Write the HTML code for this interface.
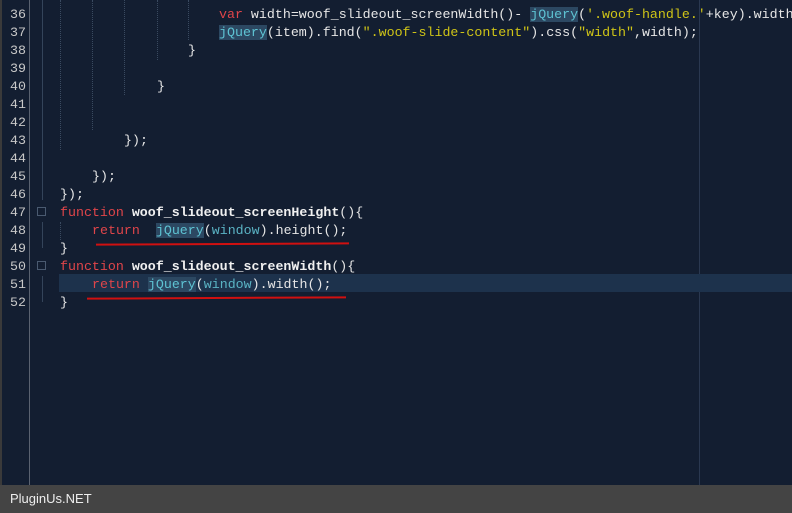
<!DOCTYPE html>
<html><head><style>
body{margin:0;width:792px;height:513px;background:#131e31;overflow:hidden;position:relative;font-family:"Liberation Mono",monospace;font-size:13.3px;}
.l{position:absolute;white-space:pre;height:18px;line-height:18px;color:#e6e6e6;margin-top:1px}
.n{position:absolute;left:0;width:26px;text-align:right;color:#c8c8c8;height:18px;line-height:18px;margin-top:1px}
.k{color:#e0454a}.j{color:#5ec3d3;background:#2c4862}.s{color:#cfc417}.w{color:#5ab3c4}.b{font-weight:bold;color:#f0f0f0}
.g{position:absolute;width:0;border-left:1px dotted #3a4a60}
.f{position:absolute;left:37px;width:9px;height:9px;border:1px solid #4a5a70;box-sizing:border-box}
</style></head><body>
<div style="position:absolute;left:0;top:0;width:2px;height:485px;background:#3a3a3a"></div>
<div style="position:absolute;left:29px;top:0;width:1px;height:485px;background:#5a6270"></div>
<div style="position:absolute;left:699px;top:0;width:1px;height:485px;background:#2a3850"></div>
<div style="position:absolute;left:59px;top:274px;width:733px;height:18px;background:#1d324c"></div>
<div class="g" style="left:60px;top:0;height:150px"></div>
<div class="g" style="left:92px;top:0;height:130px"></div>
<div class="g" style="left:124px;top:0;height:95px"></div>
<div class="g" style="left:157px;top:0;height:60px"></div>
<div class="g" style="left:188px;top:0;height:40px"></div>
<div class="g" style="left:60px;top:222px;height:18px"></div>
<div style="position:absolute;left:42px;top:0;width:1px;height:200px;background:#34445a"></div>
<div style="position:absolute;left:42px;top:222px;width:1px;height:26px;background:#34445a"></div>
<div style="position:absolute;left:42px;top:276px;width:1px;height:26px;background:#34445a"></div>
<div class="f" style="top:207px"></div><div class="f" style="top:261px"></div>
<div class="n" style="top:5px">36</div><div class="n" style="top:23px">37</div><div class="n" style="top:41px">38</div><div class="n" style="top:59px">39</div><div class="n" style="top:77px">40</div><div class="n" style="top:95px">41</div><div class="n" style="top:113px">42</div><div class="n" style="top:131px">43</div><div class="n" style="top:149px">44</div><div class="n" style="top:167px">45</div><div class="n" style="top:185px">46</div><div class="n" style="top:203px">47</div><div class="n" style="top:221px">48</div><div class="n" style="top:239px">49</div><div class="n" style="top:257px">50</div><div class="n" style="top:275px">51</div><div class="n" style="top:293px">52</div>
<div class="l" style="left:219px;top:5px"><span class="k">var</span> width=woof_slideout_screenWidth()- <span class="j">jQuery</span>(<span class="s">'.woof-handle.'</span>+key).width</div>
<div class="l" style="left:219px;top:23px"><span class="j">jQuery</span>(item).find(<span class="s">".woof-slide-content"</span>).css(<span class="s">"width"</span>,width);</div>
<div class="l" style="left:188px;top:41px">}</div>
<div class="l" style="left:157px;top:77px">}</div>
<div class="l" style="left:124px;top:131px">});</div>
<div class="l" style="left:92px;top:167px">});</div>
<div class="l" style="left:60px;top:185px">});</div>
<div class="l" style="left:60px;top:203px"><span class="k">function</span> <span class="b">woof_slideout_screenHeight</span>(){</div>
<div class="l" style="left:92px;top:221px"><span class="k">return</span>  <span class="j">jQuery</span>(<span class="w">window</span>).height();</div>
<div class="l" style="left:60px;top:239px">}</div>
<div class="l" style="left:60px;top:257px"><span class="k">function</span> <span class="b">woof_slideout_screenWidth</span>(){</div>
<div class="l" style="left:92px;top:275px"><span class="k">return</span> <span class="j">jQuery</span>(<span class="w">window</span>).width();</div>
<div class="l" style="left:60px;top:293px">}</div>
<div style="position:absolute;left:96px;top:243px;width:253px;height:2px;background:#d01010;transform:rotate(-0.3deg)"></div>
<div style="position:absolute;left:87px;top:297px;width:259px;height:2px;background:#d01010;transform:rotate(-0.3deg)"></div>
<div style="position:absolute;left:0;top:485px;width:792px;height:28px;background:#444;color:#eee;font-family:'Liberation Sans',sans-serif;font-size:13px;line-height:28px;padding-left:10px;box-sizing:border-box">PluginUs.NET</div>
</body></html>
